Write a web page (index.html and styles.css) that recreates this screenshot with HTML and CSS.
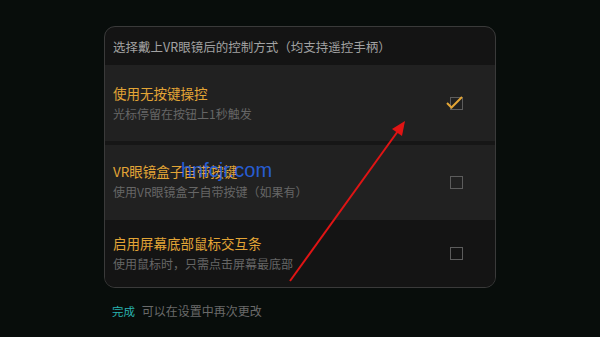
FILE: index.html
```html
<!DOCTYPE html>
<html lang="zh">
  <head>
    <meta charset="UTF-8" />
    <meta name="viewport" content="width=device-width, initial-scale=1.0" />
    <title>VR控制方式</title>
    <link rel="stylesheet" href="styles.css">
  </head>
  <body>
    <div class="page">
      <div class="card">
        <div class="card-head">选择戴上VR眼镜后的控制方式（均支持遥控手柄）</div>

        <div class="option option-first">
          <div class="option-text">
            <div class="option-title">使用无按键操控</div>
            <div class="option-sub">光标停留在按钮上1秒触发</div>
          </div>
          <div class="check checked">
            <svg width="20" height="16" viewBox="0 0 20 16">
              <path d="M1 8 L5.5 12.5 L16 2" fill="none" stroke="#e3a536" stroke-width="2" />
            </svg>
          </div>
        </div>

        <div class="option option-second">
          <div class="option-text">
            <div class="option-title">VR眼镜盒子自带按键</div>
            <div class="option-sub">使用VR眼镜盒子自带按键（如果有）</div>
          </div>
          <div class="check"></div>
        </div>

        <div class="option option-third">
          <div class="option-text">
            <div class="option-title">启用屏幕底部鼠标交互条</div>
            <div class="option-sub">使用鼠标时，只需点击屏幕最底部</div>
          </div>
          <div class="check"></div>
        </div>
      </div>

      <div class="footer">
        <span class="done">完成</span>
        <span class="hint">可以在设置中再次更改</span>
      </div>
    </div>

    <!-- overlays from the screenshot -->
    <div class="watermark">hnfcjr.com</div>
    <svg class="arrow" width="600" height="337" viewBox="0 0 600 337">
      <line x1="290" y1="281" x2="398" y2="131" stroke="#e01414" stroke-width="2" />
      <polygon points="405,121 402,136 392,129" fill="#e01414" />
    </svg>
  </body>
</html>
```

FILE: styles.css
```css
* {
  box-sizing: border-box;
}

body {
  margin: 0;
  background-color: #080d0b;
  font-family: "Noto Sans CJK SC", "Noto Sans", sans-serif;
  width: 600px;
  height: 337px;
  overflow: hidden;
  position: relative;
}

.page {
  padding: 26px 0 0 104px;
}

.card {
  width: 392px;
  height: 262px;
  border: 1px solid #3a3a3a;
  border-radius: 11px;
  overflow: hidden;
  background-color: #141414;
  display: flex;
  flex-direction: column;
}

.card-head {
  height: 38px;
  flex-shrink: 0;
  padding-left: 8px;
  display: flex;
  align-items: center;
  font-size: 12.5px;
  color: #a2a2a2;
}

.option {
  display: flex;
  align-items: center;
  justify-content: space-between;
  padding: 0 32px 0 8px;
  flex-shrink: 0;
}

.option-first {
  height: 80px;
  background-color: #212121;
  border-bottom: 4px solid #161616;
}

.option-second {
  height: 75px;
  padding-bottom: 3px;
  background-color: #212121;
}

.option-third {
  flex: 1;
  background-color: #141414;
}

.option-title {
  font-size: 13.5px;
  line-height: 20px;
  color: #e3a536;
}

.option-sub {
  font-size: 12px;
  line-height: 20px;
  margin-top: 1px;
  color: #666666;
}

.check {
  width: 13px;
  height: 13px;
  border: 1.5px solid #5c5c5c;
  position: relative;
}

.option-second .check {
  margin-top: 3px;
}

.check svg {
  position: absolute;
  left: -5px;
  top: -3px;
}

.footer {
  padding: 13px 0 0 8px;
  font-size: 12px;
  line-height: 20px;
}

.done {
  color: #28b2b0;
  font-size: 11.5px;
  margin-right: 4px;
}

.hint {
  color: #6a6a6a;
}

.watermark {
  position: absolute;
  left: 181px;
  top: 158px;
  font-family: "Liberation Sans", sans-serif;
  font-size: 20px;
  line-height: 24px;
  color: rgba(40, 100, 228, 0.92);
}

.arrow {
  position: absolute;
  left: 0;
  top: 0;
}
```
